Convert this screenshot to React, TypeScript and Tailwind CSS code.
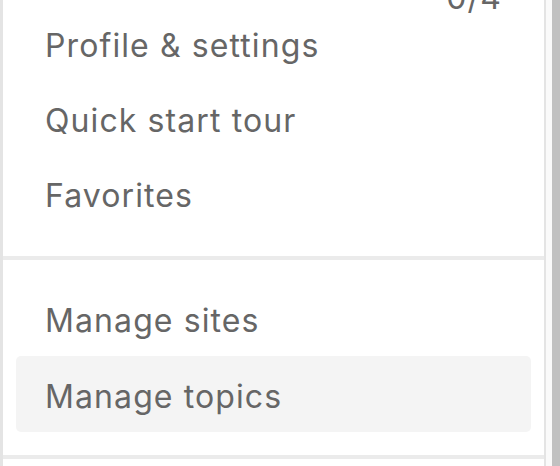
import React from 'react';

const font = { fontFamily: 'Inter, "Noto Sans", sans-serif' };

function MenuItem({ label, active = false, tall = false }: { label: string; active?: boolean; tall?: boolean }) {
  return (
    <div
      className={`mx-[13px] flex items-center rounded-[5px] pl-[29px] text-[32px] tracking-[1.1px] text-[#666666] ${
        tall ? 'h-[76px] pt-[5px]' : 'h-[75px]'
      } ${active ? 'bg-[#f4f4f4]' : ''}`}
    >
      {label}
    </div>
  );
}

export default function App() {
  return (
    <div className="flex h-[466px] w-[560px] overflow-hidden bg-white" style={font}>
      <div className="flex w-[546px] flex-col border-l-[3px] border-r-2 border-[#e4e4e4] bg-white">
        {/* checklist progress, cut off at the top */}
        <div className="flex h-[8px] items-end justify-end pr-[42px]">
          <span className="text-[32px] leading-[20px] tracking-[1.1px] text-[#666666]">0/4</span>
        </div>

        <div className="flex flex-col">
          <MenuItem label="Profile & settings" />
          <MenuItem label="Quick start tour" />
          <MenuItem label="Favorites" />
        </div>

        <div className="mt-[23px] h-1 bg-[#ebebeb]" />

        <div className="flex flex-col pt-5 pb-[23px]">
          <MenuItem label="Manage sites" tall />
          <MenuItem label="Manage topics" tall active />
        </div>

        <div className="h-1 bg-[#ebebeb]" />
        <div className="flex-1" />
      </div>
      <div className="w-[6px] bg-[#fafafa]" />
      <div className="w-2 bg-[#c1c1c1]" />
    </div>
  );
}
